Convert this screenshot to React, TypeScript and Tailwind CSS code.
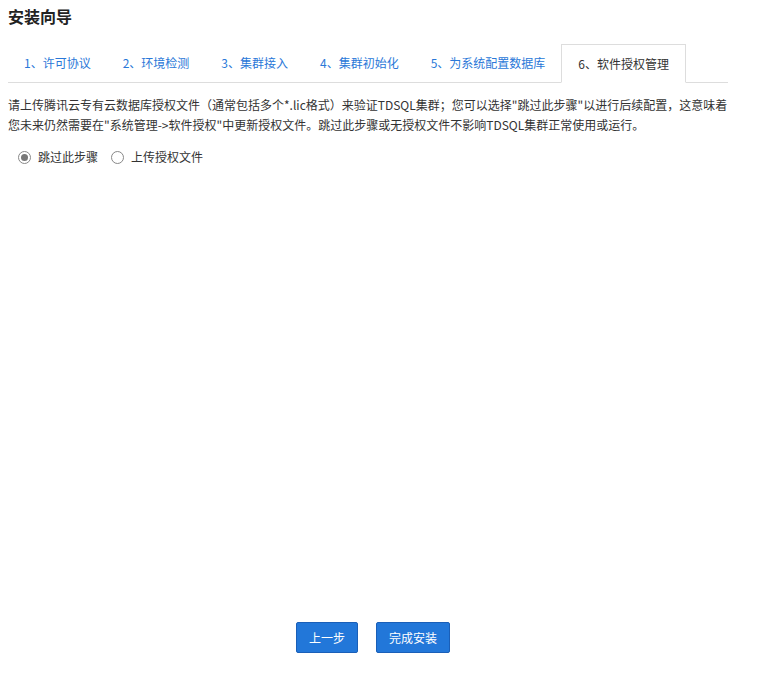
const font = { fontFamily: '"Microsoft YaHei", "Noto Sans CJK SC", sans-serif' };

const steps = ["1、许可协议", "2、环境检测", "3、集群接入", "4、集群初始化", "5、为系统配置数据库", "6、软件授权管理"];

export default function App() {
  return (
    <div className="w-[758px] h-[682px] bg-white px-2 text-[#333]" style={font}>
      <h1 className="pt-[5px] text-[16px] font-bold leading-[22px] text-[#222]">安装向导</h1>
      <div className="mt-[17px] flex w-[720px] border-b border-[#ddd] text-[12px]">
        {steps.map((s, i) =>
          i === 5 ? (
            <div key={s} className="-mb-px h-[39px] border border-b-white border-[#ddd] bg-white px-4 leading-[38px] text-[#333]">
              {s}
            </div>
          ) : (
            <div key={s} className="h-[38px] px-4 leading-[38px] text-[#2a78d8]">
              {s}
            </div>
          )
        )}
      </div>
      <p className="mt-[12px] w-[730px] text-[12px] leading-[20px] text-[#333]">
        请上传腾讯云专有云数据库授权文件（通常包括多个*.lic格式）来验证TDSQL集群；您可以选择"跳过此步骤"以进行后续配置，这意味着您未来仍然需要在"系统管理-&gt;软件授权"中更新授权文件。跳过此步骤或无授权文件不影响TDSQL集群正常使用或运行。
      </p>
      <div className="mt-[12px] flex items-center text-[12px] leading-[20px]">
        <label className="ml-[10px] flex items-center gap-[7px]">
          <span className="flex h-[13px] w-[13px] items-center justify-center rounded-full border border-[#888] bg-white">
            <span className="h-[7px] w-[7px] rounded-full bg-[#777]" />
          </span>
          跳过此步骤
        </label>
        <label className="ml-[13px] flex items-center gap-[7px]">
          <span className="h-[13px] w-[13px] rounded-full border border-[#888] bg-white" />
          上传授权文件
        </label>
      </div>
      <div className="mt-[455px] flex w-[728px] justify-center gap-[18px] pl-[2px]">
        <button className="h-[31px] w-[62px] rounded-[2px] border border-[#1a5fb8] bg-[#2277d9] text-[12px] text-white">上一步</button>
        <button className="h-[31px] w-[74px] rounded-[2px] border border-[#1a5fb8] bg-[#2277d9] text-[12px] text-white">完成安装</button>
      </div>
    </div>
  );
}
